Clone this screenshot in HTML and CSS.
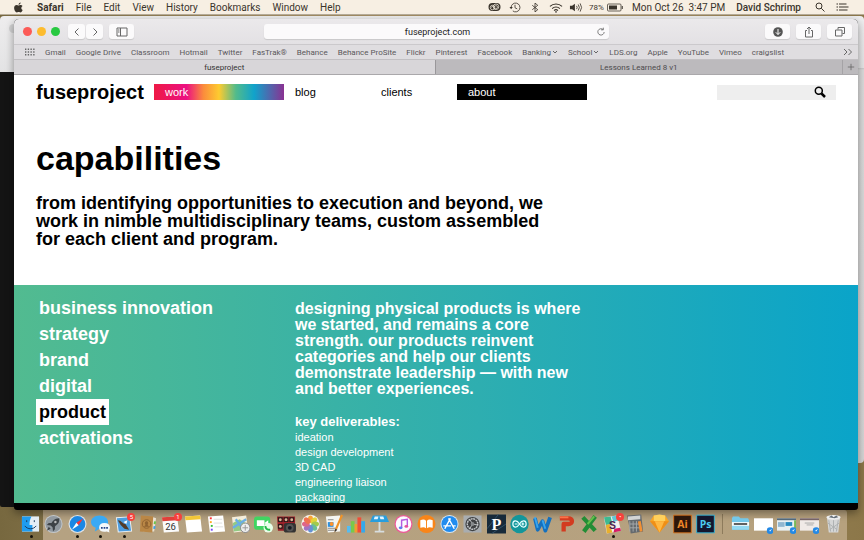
FILE: index.html
```html
<!DOCTYPE html>
<html lang="en">
<head>
<meta charset="utf-8">
<meta name="viewport" content="width=device-width, initial-scale=1">
<title>fuseproject – capabilities</title>
<link rel="stylesheet" href="styles.css">
</head>
<body>
<header class="menubar">
  <svg class="apple" viewBox="0 0 20 20"><path d="M14 1c.1 2-1.700 4-3.900 4C9.900 3.100 11.900 1.200 14 1zM17.500 14.500c-1 2.400-2.300 4.500-4 4.500-1.200 0-1.800-.8-3.300-.8s-2.100.8-3.300.8C4.500 19 2 14.500 2 10.800 2 7.500 4.100 5.500 6.500 5.500c1.400 0 2.600.9 3.500.9.900 0 2.200-1 4-1 1.400 0 2.600.7 3.300 1.800-3.200 1.900-2.700 6.100.2 7.300z" fill="currentColor"/></svg>
  <nav class="menus">
    <strong>Safari</strong><span>File</span><span>Edit</span><span>View</span><span>History</span><span>Bookmarks</span><span>Window</span><span>Help</span>
  </nav>
  <div class="status">
    <svg class="cc" viewBox="0 0 26 20"><rect x="1" y="2" width="24" height="16" rx="8" fill="currentColor"/><g fill="none" stroke="#f6eee2" stroke-width="1.500"><circle cx="9" cy="11" r="4.500"/><circle cx="16" cy="9.500" r="5.500"/><path d="M7 11c0-3 4-3 5 0s3 3 5 2 3-5 0-5.500-4 1-5 3"/></g></svg>
    <svg class="tray" viewBox="0 0 20 20"><g fill="none" stroke="currentColor" stroke-width="1.500"><path d="M3 10a8 8 0 1 1 3 6.200M10 5v5.500l4 2"/></g><path d="M0 9h6l-3 4z" fill="currentColor"/></svg>
    <svg class="tray" viewBox="0 0 20 20"><path d="M5 6l10 8-5 4V2l5 4-10 8" fill="none" stroke="currentColor" stroke-width="1.500"/></svg>
    <svg class="tray wide" viewBox="0 0 24 20"><g fill="none" stroke="currentColor" stroke-width="2"><path d="M1 8a16 16 0 0 1 22 0M5 12a10 10 0 0 1 14 0M8.500 15.500a5 5 0 0 1 7 0"/></g><circle cx="12" cy="18" r="1.500" fill="currentColor"/></svg>
    <svg class="tray wide" viewBox="0 0 24 20"><path d="M1 7h4l5-4v14l-5-4H1z" fill="currentColor"/><g fill="none" stroke="currentColor" stroke-width="1.500"><path d="M13 7a5 5 0 0 1 0 6M16 4.500a9 9 0 0 1 0 11M19.500 2.500a13 13 0 0 1 0 15"/></g></svg>
    <span class="percent">78%</span>
    <svg class="battery" viewBox="0 0 32 18"><rect x="1" y="2" width="27" height="14" rx="2" fill="none" stroke="currentColor" stroke-width="1.500"/><path d="M4 5h16v8H4zM29.500 6h2v6h-2z" fill="currentColor"/></svg>
    <span class="clock">Mon Oct 26&nbsp; 3:47 PM</span>
    <span class="user">David Schrimp</span>
    <svg class="spot" viewBox="0 0 20 20"><g fill="none" stroke="currentColor" stroke-width="2"><circle cx="8" cy="8" r="6"/><path d="M12.500 12.500L19 19"/></g></svg>
    <svg class="list" viewBox="0 0 24 16"><path d="M0 2h3M0 8h3M0 14h3M5 2h15M5 8h19M5 14h17" stroke="currentColor" stroke-width="2.200"/></svg>
  </div>
</header>

<div class="stage">
  <div class="behind-right"></div>
  <div class="behind-left"><i></i></div>
  <main class="window">
    <div class="toolbar">
      <div class="lights"><i class="close"></i><i class="min"></i><i class="max"></i></div>
      <div class="history">
        <button aria-label="Back"><svg viewBox="0 0 10 10"><path d="M6.500 1.500L3 5l3.500 3.500"/></svg></button>
        <button aria-label="Forward"><svg viewBox="0 0 10 10"><path d="M3.500 1.500L7 5 3.500 8.500"/></svg></button>
      </div>
      <button class="side" aria-label="Sidebar"><svg viewBox="0 0 12 10"><path d="M1 1h10v8H1zM4.500 1v8M2 3h1.500M2 5h1.500"/></svg></button>
      <div class="address">
        <input aria-label="Address" value="fuseproject.com">
        <svg viewBox="0 0 12 12"><path d="M8.500 3A3.800 3.800 0 1 0 9.800 6M8.800 .8V3.400H6"/></svg>
      </div>
      <div class="actions">
        <button aria-label="Downloads"><svg viewBox="0 0 12 12"><circle class="disc" cx="6" cy="6" r="4.800"/><path class="arrow" d="M6 3v5.500M3.800 6.300L6 8.500l2.200-2.200"/></svg></button>
        <button aria-label="Share"><svg viewBox="0 0 12 12"><path d="M4 4.500H2.500v6.500h7V4.500H8M6 8V1M4 3l2-2 2 2"/></svg></button>
        <button aria-label="Show tabs"><svg viewBox="0 0 12 12"><path d="M4 3.500V1.500h6.500v6H8.500M1.500 4h6.500v6H1.500z"/></svg></button>
      </div>
    </div>
    <nav class="favorites">
      <svg class="grid" viewBox="0 0 11 8"><path d="M0 1h11M0 4h11M0 7h11" stroke="#666" stroke-width="1.500" stroke-dasharray="1.500 1.500"/></svg>
      <a href="#">Gmail</a><a href="#">Google Drive</a><a href="#">Classroom</a><a href="#">Hotmail</a><a href="#">Twitter</a><a href="#">FasTrak®</a><a href="#">Behance</a><a href="#">Behance ProSite</a><a href="#">Flickr</a><a href="#">Pinterest</a><a href="#">Facebook</a><a href="#">Banking<svg viewBox="0 0 6 6"><path d="M1 2l2 2 2-2"/></svg></a><a href="#">School<svg viewBox="0 0 6 6"><path d="M1 2l2 2 2-2"/></svg></a><a href="#">LDS.org</a><a href="#">Apple</a><a href="#">YouTube</a><a href="#">Vimeo</a><a href="#">craigslist</a>
      <svg class="more" viewBox="0 0 10 8"><path d="M1 1l3 3-3 3M5.500 1l3 3-3 3"/></svg>
    </nav>
    <div class="tabs">
      <button class="tab active">fuseproject</button>
      <button class="tab">Lessons Learned 8 v1</button>
      <button class="add" aria-label="New tab"><svg viewBox="0 0 10 10"><path d="M5 1v8M1 5h8"/></svg></button>
    </div>

    <div class="page">
      <header class="site-header">
        <a class="logo" href="#">fuseproject</a>
        <a class="work" href="#">work</a>
        <a href="#">blog</a>
        <a href="#">clients</a>
        <a class="about" href="#">about</a>
        <label class="search"><input aria-label="Search"><svg viewBox="0 0 12 12"><circle cx="4.800" cy="4.800" r="3.500" fill="none" stroke="#000" stroke-width="1.500"/><path d="M7.500 7.500L11 11" stroke="#000" stroke-width="2.500"/></svg></label>
      </header>
      <section class="intro">
        <h1>capabilities</h1>
        <p>from identifying opportunities to execution and beyond, we<br>work in nimble multidisciplinary teams, custom assembled<br>for each client and program.</p>
      </section>
      <section class="detail">
        <nav class="topics">
          <a href="#">business innovation</a><a href="#">strategy</a><a href="#">brand</a><a href="#">digital</a><a class="current" href="#">product</a><a href="#">activations</a>
        </nav>
        <div class="copy">
          <p class="lead">designing physical products is where<br>we started, and remains a core<br>strength. our products reinvent<br>categories and help our clients<br>demonstrate leadership — with new<br>and better experiences.</p>
          <h2>key deliverables:</h2>
          <ul><li>ideation</li><li>design development</li><li>3D CAD</li><li>engineering liaison</li><li>packaging</li></ul>
        </div>
      </section>
    </div>
  </main>
</div>

<footer class="dock">
  <span class="app open"><svg viewBox="0 0 20 20"><path d="M1 2h18v16H1z" fill="#e4eef6"/><path d="M1 2h10c-2 4-2 6-2 9h3v7H1z" fill="#1f9cf0"/><path d="M6 6v2M14 6v2M4 12c3 4 9 4 12 0" fill="none" stroke="#183a60"/></svg></span>
  <span class="app"><svg viewBox="0 0 20 20"><circle cx="10" cy="10" r="9.500" fill="#c3c8cc"/><circle cx="10" cy="10" r="8.500" fill="#92999f"/><path d="M16 4c-5 0-7 3-8 5H5l-2 2 4 .5 2 2 .5 4 2-2v-3c3-2 5-4 4.500-8.500zM5 13l-2 4 4-2z" fill="#3d4246"/><circle cx="12" cy="8" r="1.300" fill="#bbb"/></svg></span>
  <span class="app open"><svg viewBox="0 0 20 20"><circle cx="10" cy="10" r="9.500" fill="#dfe3e6"/><circle cx="10" cy="10" r="8.300" fill="#1b87e4"/><path d="M16 4l-4.800 7.200-2.400-2.400z" fill="#f33"/><path d="M4 16l4.800-7.200 2.400 2.400z" fill="#fff"/></svg></span>
  <span class="app open"><svg viewBox="0 0 20 20"><path d="M9 1c5 0 9 3 9 7s-4 7-9 7l-5 3 1-4C2 13 0 11 0 8c0-4 4-7 9-7z" fill="#39a9f4"/><path d="M14 9c4 0 6 2 6 5l-1 3 .500 2-3-1c-5 1-8-1-8-4s2-5 5.500-5z" fill="#f4f8fb"/><path d="M10.500 14h1.800M13.300 14h1.800M16 14h1.800" stroke="#248" stroke-width="1.800"/></svg></span>
  <span class="app open"><svg viewBox="0 0 20 20"><path d="M2 3l15-1 2 16-15 1z" fill="#eef2f5"/><path d="M3 4l13-1 2 14-13 1z" fill="#4c9de0"/><path d="M4 6c4 0 5 4 8 4l4 6-5-1-4-4z" fill="#533c28"/><path d="M10 8l4-2-1 4z" fill="#fff"/></svg><b class="badge">5</b></span>
  <span class="app"><svg viewBox="0 0 20 20"><path d="M16 3l3 1-2 14H5z" fill="#e9e1d1"/><path d="M17 7l2 .3-.500 3-2-.3z" fill="#6bc34b"/><path d="M16.500 12l2 .3-.500 3-2-.3z" fill="#3d9ee5"/><path d="M3 1l13 1-1 17-13-1z" fill="#ba8746"/><circle cx="9" cy="10" r="4.500" fill="none" stroke="#906331"/><path d="M9 7c2 0 2 3 1 4l2 2H6l2-2c-1-1-1-4 1-4z" fill="#906331"/></svg></span>
  <span class="app"><svg viewBox="0 0 20 20"><path d="M1 3l16-1 2 16-16 1z" fill="#fafafa"/><path d="M1 3l16-1 .5 4-16 1z" fill="#e0403a"/><text x="10" y="16" class="day">26</text></svg><b class="badge">1</b></span>
  <span class="app"><svg viewBox="0 0 20 20"><path d="M1 2l16-1 2 17-16 1z" fill="#fff"/><path d="M1 2l16-1 .5 4-16 1z" fill="#f3c737"/></svg></span>
  <span class="app"><svg viewBox="0 0 20 20"><path d="M1 2l16-1 2 17-16 1z" fill="#fff"/><path d="M3 4h2" stroke="#f33" stroke-width="2"/><path d="M3 8h2" stroke="#fa2" stroke-width="2"/><path d="M4 12h2" stroke="#3b3" stroke-width="2"/><path d="M4 16h2" stroke="#74f" stroke-width="2"/><path d="M7 5h9M7 9h9M8 13h9" stroke="#ddd"/></svg></span>
  <span class="app"><svg viewBox="0 0 20 20"><path d="M1 3l15-2 2 16-15 2z" fill="#f4eddb"/><path d="M2 9l7-4 8 5 1 6-15 2z" fill="#92ca84"/><path d="M2 14l14-9M5 5l9 12" stroke="#6baee4" stroke-width="2.500"/><circle cx="15" cy="14" r="5" fill="#eee" stroke="#888"/><path d="M12 14h6M15 11v6" stroke="#999"/></svg></span>
  <span class="app"><svg viewBox="0 0 20 20"><rect y="2" width="17" height="14" rx="3" fill="#41d562"/><path d="M3 6h8v6H3zM11 9l4-3v6z" fill="#fff"/><circle cx="15" cy="14" r="5" fill="#e7ffe9"/><path d="M12 12c0 3 2 4 5 4" fill="none" stroke="#23b848" stroke-width="2"/></svg></span>
  <span class="app"><svg viewBox="0 0 20 20"><path d="M0 2h19v15H1z" fill="#9b2029"/><path d="M1 3h5v5H1zM7 3h5v5H7zM13 3h5v5h-5zM1 10h5v5H1z" fill="#2d1718"/><circle cx="3.500" cy="5.500" r="1.500" fill="#dcb398"/><circle cx="9.500" cy="5.500" r="1.500" fill="#dcb398"/><circle cx="15.500" cy="5.500" r="1.500" fill="#dcb398"/><circle cx="3.500" cy="12.500" r="1.500" fill="#dcb398"/><rect x="7" y="9" width="13" height="10" rx="3" fill="#333"/><circle cx="13.500" cy="14" r="4" fill="#555"/><circle cx="13.500" cy="14" r="2" fill="#161b22"/></svg></span>
  <span class="app"><svg viewBox="0 0 20 20"><circle cx="10" cy="10" r="9.700" fill="#f6f4ef"/><g opacity=".9"><ellipse cx="10" cy="5" rx="2.700" ry="4" fill="#fa9c24"/><ellipse cx="10" cy="5" rx="2.700" ry="4" fill="#e4cf25" transform="rotate(45 10 10)"/><ellipse cx="10" cy="5" rx="2.700" ry="4" fill="#9bc63b" transform="rotate(90 10 10)"/><ellipse cx="10" cy="5" rx="2.700" ry="4" fill="#5bb98b" transform="rotate(135 10 10)"/><ellipse cx="10" cy="5" rx="2.700" ry="4" fill="#5788d2" transform="rotate(180 10 10)"/><ellipse cx="10" cy="5" rx="2.700" ry="4" fill="#9b66bd" transform="rotate(225 10 10)"/><ellipse cx="10" cy="5" rx="2.700" ry="4" fill="#dd567e" transform="rotate(270 10 10)"/><ellipse cx="10" cy="5" rx="2.700" ry="4" fill="#ef6540" transform="rotate(315 10 10)"/></g></svg></span>
  <span class="app"><svg viewBox="0 0 20 20"><path d="M2 2l15-1v17l-13 1z" fill="#f5f5f1"/><path d="M4 5h6v1H4zM4 14h9v1H4zM4 16h8v1H4z" fill="#888"/><path d="M4 8h6v5H4z" fill="#2d91df"/><circle cx="8" cy="10" r="2" fill="#ff922c"/><path d="M18 0l2 1-6 14-3 4 1-5z" fill="#f09226"/><path d="M12 15l2 1-3 3z" fill="#333"/></svg></span>
  <span class="app"><svg viewBox="0 0 20 20"><path d="M0 12h4v7H0z" fill="#56bcf0"/><path d="M4 7h4v12H4z" fill="#78c94a"/><path d="M8 10h3v9H8z" fill="#f39b2f"/><path d="M11 3h4v16h-4z" fill="#f04e38"/><path d="M15 7h4v12h-4z" fill="#35a8eb"/></svg></span>
  <span class="app"><svg viewBox="0 0 20 20"><path d="M3 1h14l3 7H0z" fill="#289ede"/><path d="M5 2h4l-1 3H4zM10 2h4l1 3h-4z" fill="#e3f4ff"/><path d="M9 8h2v9H9zM5 17h10v2H5z" fill="#d7dddf"/></svg></span>
  <span class="app"><svg viewBox="0 0 20 20"><circle cx="10" cy="10" r="9.500" fill="#ef5799"/><circle cx="10" cy="10" r="8.200" fill="#fbfbff"/><path d="M8 14V6l6-1v7" fill="none" stroke="#b65bdf" stroke-width="1.500"/><ellipse cx="7" cy="14" rx="2" ry="1.500" fill="#5c80ef"/><ellipse cx="13" cy="12.500" rx="2" ry="1.500" fill="#e6519d"/></svg></span>
  <span class="app"><svg viewBox="0 0 20 20"><circle cx="10" cy="10" r="9.500" fill="#f98519"/><path d="M3.500 6C6 5 8 5 9.500 6.500v8C8 13 6 13 3.500 14zM16.500 6C14 5 12 5 10.500 6.500v8C12 13 14 13 16.500 14z" fill="#fff"/></svg></span>
  <span class="app"><svg viewBox="0 0 20 20"><circle cx="10" cy="10" r="9.500" fill="#d9e7f2"/><circle cx="10" cy="10" r="8.500" fill="#218cef"/><path d="M5 15L11 4M9 4l6 11M3.500 12h8M14 12h2.500" stroke="#fff" stroke-width="1.500"/></svg></span>
  <span class="app"><svg viewBox="0 0 20 20"><path d="M.5 1h19v18H.5z" fill="#a9adb0"/><circle cx="10" cy="10" r="7.500" fill="#3f4143"/><circle cx="10" cy="10" r="5.500" fill="none" stroke="#c5c8ca" stroke-width="1.500" stroke-dasharray="2 .6"/><path d="M10 10l5 1M10 10L7 5M10 10l-3 5" stroke="#c5c8ca"/><circle cx="10" cy="10" r="2" fill="#85898b"/></svg></span>
  <span class="app"><svg viewBox="0 0 20 20"><path d="M0 0h20v20H0z" fill="#172a3a"/><path d="M0 15L12 0M5 20l15-10" stroke="#315068"/><text x="10" y="16" class="serif">P</text></svg></span>
  <span class="app"><svg viewBox="0 0 20 20"><circle cx="10" cy="10" r="9.700" fill="#13969b"/><path d="M10 10C7 5 3 6.500 3 10s4 5 7 0 7-3.500 7 0-4 5-7 0zM5 10h3M12 10h3M13.500 8.500v3" fill="none" stroke="#e5ffff" stroke-width="1.300"/></svg></span>
  <span class="app"><svg viewBox="0 0 20 20"><path d="M2 4l3 12 5-9 3 10L18 3" fill="none" stroke="#1470bf" stroke-width="4" stroke-linejoin="round"/><path d="M2 3l3 11M10 6l3 9" stroke="#38a5ee" stroke-width="2"/></svg></span>
  <span class="app"><svg viewBox="0 0 20 20"><path d="M3 4h9c5 0 5 6 0 6H7v8" fill="none" stroke="#d33b20" stroke-width="4.500" stroke-linejoin="round"/><path d="M3 3h9" stroke="#fb7449" stroke-width="2"/></svg></span>
  <span class="app"><svg viewBox="0 0 20 20"><path d="M16 2L4 18M3 3l13 14" stroke="#238d36" stroke-width="4.500"/><path d="M15 2l-7 8" stroke="#66c04c" stroke-width="2"/></svg></span>
  <span class="app open"><svg viewBox="0 0 20 20"><path d="M1 3l14-2 4 16-15 3z" fill="#f2f0ed"/><path d="M1 3l7-1 2 8-7 1z" fill="#3eb991"/><path d="M3 11l4-1 3 9-6 1z" fill="#e8af2d"/><path d="M12 15l6-1 1 3-8 2z" fill="#d61c66"/><path d="M9 2l6-1 2 5-6 2z" fill="#62c6d7"/><text x="10" y="15" class="slack">S</text></svg><b class="badge">•</b></span>
  <span class="app"><svg viewBox="0 0 20 20"><path d="M1 1l15-1 2 18-13 2z" fill="#656a6e"/><path d="M2 2l13-1v4l-13 1z" fill="#d2d4d5"/><path d="M4 7v11M7.500 7v11M11 7v11M4 10h10M4 14h11" stroke="#a5a9ab"/><path d="M14 7l2 11" stroke="#f29134" stroke-width="3"/></svg></span>
  <span class="app"><svg viewBox="0 0 20 20"><path d="M4 1h12l4 6-10 12L0 7z" fill="#f8a425"/><path d="M4 1l6-1 6 1 0 6H4z" fill="#ffd05d"/><path d="M0 7h20L10 19z" fill="#ef8f17"/><path d="M5 7h10l-5 12z" fill="#ffb842"/></svg></span>
  <span class="app"><svg viewBox="0 0 20 20"><path d="M.7.700h18.600v18.600H.7z" fill="#2d160b" stroke="#d5701a"/><text x="10" y="14" class="adobe ai">Ai</text></svg></span>
  <span class="app"><svg viewBox="0 0 20 20"><path d="M.7.700h18.600v18.600H.7z" fill="#14162e" stroke="#35b5d7"/><text x="10" y="14" class="adobe ps">Ps</text></svg></span>
  <span class="divider"></span>
  <span class="app"><svg viewBox="0 0 20 20"><path d="M1 4l1-2h6l2 2h8l1 2v10H1z" fill="#74c8ea"/><path d="M1 8h18v4H1z" fill="#f6fbfd"/><path d="M3 10h14" stroke="#222" stroke-width="1.500"/><path d="M1 12h18v4H1z" fill="#94d9f2"/></svg></span>
  <span class="app"><svg viewBox="0 0 20 20"><path d="M0 4h20v13H0z" fill="#fff"/><circle cx="17" cy="17" r="3.500" fill="#2489e5"/><path d="M19 15l-2 3-1-1z" fill="#fff"/></svg></span>
  <span class="app"><svg viewBox="0 0 20 20"><path d="M0 4h20v13H0z" fill="#e9f0f2"/><path d="M0 4h20v2H0z" fill="#53697a"/><path d="M1 8h7v5H1z" fill="#91b7d1"/><path d="M9 8h7v4H9z" fill="#278ac0"/><path d="M18 6h2v9h-2z" fill="#78b957"/><circle cx="17" cy="17" r="3.500" fill="#2489e5"/><path d="M19 15l-2 3-1-1z" fill="#fff"/></svg></span>
  <span class="app"><svg viewBox="0 0 20 20"><path d="M0 4h20v13H0z" fill="#f0eae7"/><path d="M0 4h20v2H0z" fill="#766467"/><path d="M5 9h10M7 11h7" stroke="#aaa"/><circle cx="17" cy="17" r="3.500" fill="#2489e5"/><path d="M19 15l-2 3-1-1z" fill="#fff"/></svg></span>
  <span class="app"><svg viewBox="0 0 20 20"><path d="M3 2h14l-2 17H5z" fill="#d5d6d6"/><path d="M5 6l2 12M10 6v12M15 6l-2 12M4 9l10 7M16 9L6 16" stroke="#adb0b1"/><ellipse cx="10" cy="3" rx="7.500" ry="2.500" fill="#eee"/><path d="M5 3l3-2 2 2 3-2 2 2-4 1z" fill="#646e78"/></svg></span>
</footer>
</body>
</html>
```
FILE: styles.css
```css
* { box-sizing: border-box; }
body {
  margin: 0;
  height: 100vh;
  display: flex;
  flex-direction: column;
  overflow: hidden;
  font-family: Roboto, "Liberation Sans", sans-serif;
  background: linear-gradient(90deg, #77683f, #a08b62 30%, #a58f65 70%, #8c7749);
}
a { color: inherit; text-decoration: none; }
button { border: 0; margin: 0; padding: 0; font: inherit; color: inherit; }
input { border: 0; margin: 0; padding: 0; min-width: 0; font: inherit; color: inherit; background: none; outline: 0; }
svg { display: block; flex: none; }
h1, h2, p, ul { margin: 0; padding: 0; }

.menubar {
  flex: none;
  display: flex;
  align-items: center;
  height: 15px;
  padding: 0 15px 0 13px;
  color: #3a342c;
  background: #f7efe3;
  border-bottom: 1px solid #b7ad99;
  font-size: 10px;
  white-space: nowrap;
}
.apple { width: 11px; height: 11px; margin-right: 13px; }
.menus, .status { display: flex; align-items: center; }
.menus { gap: 12px; }
.status { margin-left: auto; }
.cc { width: 13px; height: 10px; margin-right: 8px; }
.tray { width: 12px; height: 11px; margin-right: 8px; }
.tray.wide { width: 14px; margin-right: 6px; }
.percent { font-size: 8px; margin-right: 3px; }
.battery { width: 16px; height: 9px; margin-right: 9px; }
.clock { margin-right: 11px; }
.user { font-weight: 500; margin-right: 14px; }
.spot { width: 10px; height: 10px; margin-right: 11px; }
.list { width: 13px; height: 8px; }

.stage { position: relative; flex: 1; min-height: 0; padding: 4px 6px 0 14px; }
.behind-left {
  position: absolute;
  left: 0; top: 1px; bottom: 3px;
  width: 30px;
  border-radius: 4px 0 0 2px;
  background: linear-gradient(#eeedee 0, #e3e3e4 56px, #141414 56px);
}
.behind-left i { position: absolute; left: 9px; top: 8px; width: 9px; height: 9px; border-radius: 50%; background: #d2d2d3; }
.behind-right {
  position: absolute;
  left: 20px; right: 0; top: 1px; bottom: 47px;
  border-radius: 0 4px 4px 0;
  background: linear-gradient(#eeeeef 0, #e6e6e7 52px, #c9c9ca 52px, #dcdcdc 54px, #d6d6d6);
}
.window {
  position: relative;
  height: 100%;
  display: flex;
  flex-direction: column;
  border-radius: 5px 5px 3px 3px;
  overflow: hidden;
  background: #000;
  padding-bottom: 7px;
  box-shadow: 0 3px 8px rgba(0, 0, 0, .4);
}
.toolbar {
  flex: none;
  display: flex;
  align-items: center;
  height: 25px;
  padding: 0 6px 0 9px;
  background: linear-gradient(#ebe9eb, #e3e1e4);
}
.toolbar button, .address {
  display: flex;
  align-items: center;
  justify-content: center;
  height: 15px;
  border-radius: 3px;
  background: #fbfafb;
  box-shadow: 0 1px 1px rgba(0, 0, 0, .12);
}
.toolbar svg, .favorites svg, .tabs svg { fill: none; stroke: #666; stroke-width: 1; }
.toolbar .disc { fill: #555; stroke: none; }
.toolbar .arrow { stroke: #fff; }
.lights { display: flex; gap: 5px; }
.lights i { width: 9px; height: 9px; border-radius: 50%; }
.close { background: #fc5b57; }
.min { background: #fdbc2f; }
.max { background: #28c941; }
.history { display: flex; gap: 1px; margin-left: 8px; }
.history button { width: 17px; }
.history svg { width: 10px; height: 10px; }
.toolbar .side { width: 25px; margin-left: 6px; }
.side svg { width: 12px; height: 10px; }
.address { flex: 1; max-width: 345px; margin-left: 130px; padding: 0 3px 0 15px; font-size: 9px; color: #222; }
.address input { flex: 1; text-align: center; }
.address svg { width: 10px; height: 10px; }
.actions { display: flex; gap: 6px; margin-left: auto; }
.toolbar .actions button { width: 25px; }
.actions svg { width: 12px; height: 12px; }

.favorites {
  flex: none;
  display: flex;
  align-items: center;
  gap: 10px;
  height: 15px;
  padding: 0 5px 0 11px;
  background: #dfdde0;
  border-top: 1px solid #cbc9cc;
  color: #5a585b;
  font-size: 8px;
  white-space: nowrap;
}
.favorites a { display: flex; align-items: center; }
.favorites a svg { width: 6px; height: 6px; margin-left: 1px; }
.grid { width: 10px; height: 8px; }
.more { width: 10px; height: 8px; margin-left: auto; }
.tabs {
  flex: none;
  display: flex;
  height: 16px;
  border-top: 1px solid #c2c0c3;
  border-bottom: 1px solid #aaa8ab;
  font-size: 8px;
}
.tab { flex: 1; color: #4d4b4e; background: #bcbabd; }
.tab.active { flex: 1 1 15px; color: #333; background: #d8d6d9; border-right: 1px solid #99979a; }
.add { width: 16px; background: #bcbabd; border-left: 1px solid #a5a3a6; display: grid; place-items: center; }
.add svg { width: 8px; height: 8px; }

.page { flex: 1; min-height: 0; overflow: hidden; display: flex; flex-direction: column; background: #fff; color: #000; font-family: "Liberation Sans", Arial, sans-serif; }
.site-header {
  flex: none;
  display: grid;
  grid-template-columns: 118px 130px 86px 87px 130px minmax(0, 1fr);
  align-items: center;
  padding: 7px 22px 0;
  font-size: 11px;
  line-height: 16px;
}
.site-header a { padding-left: 11px; }
.site-header .logo { padding: 0; font-size: 20px; line-height: 20px; font-weight: bold; }
.site-header .work { color: #fff; background: linear-gradient(90deg, #ee1a45, #ec1082 25%, #fb8c3c 38%, #fdcb30 50%, #52bb8b 63%, #10a3cb 77%, #8a3192); }
.site-header .about { color: #fff; background: #000; }
.search { display: flex; align-items: center; justify-self: end; width: 119px; height: 15px; padding-right: 10px; background: #eee; }
.search input { flex: 1; }
.search svg { width: 12px; height: 12px; }
.intro { flex: none; padding: 37px 22px; }
.intro h1 { font-size: 34px; line-height: 38px; margin-bottom: 17px; }
.intro p { font-size: 18px; line-height: 18px; font-weight: bold; }
.detail {
  flex: 1;
  min-height: 0;
  display: grid;
  grid-template-columns: 259px 1fr;
  padding: 10px 22px 0;
  color: #fff;
  background: linear-gradient(90deg, #52bb90, #2eaeb0 55%, #0aa4c9);
}
.topics { display: flex; flex-direction: column; align-items: flex-start; font-size: 18px; line-height: 26px; font-weight: bold; }
.topics a { padding: 0 3px; }
.topics .current { color: #000; background: #fff; }
.copy { padding-top: 6px; }
.lead { font-size: 16px; line-height: 16px; font-weight: bold; margin-bottom: 17px; }
.copy h2 { font-size: 13px; line-height: 16px; }
.copy ul { list-style: none; font-size: 11px; line-height: 15px; }

.dock {
  flex: none;
  display: flex;
  align-items: flex-start;
  height: 30px;
  margin: 0 17px;
  padding: 4px 2px 0;
  border-radius: 0 3px 0 0;
  background: linear-gradient(90deg, transparent 26px, #b5a282 26px, #b6a17e);
}
.app { position: relative; flex: 1; display: flex; justify-content: center; height: 26px; }
.app svg { width: 19px; height: 20px; }
.open::after { content: ""; position: absolute; bottom: 2px; left: 50%; width: 3px; height: 3px; margin-left: -1px; border-radius: 50%; background: #16120a; }
.badge { position: absolute; top: -1px; right: 0; width: 8px; height: 8px; border-radius: 50%; background: #f6413d; color: #fff; font-size: 6px; line-height: 8px; text-align: center; font-weight: normal; }
.divider { width: 11px; height: 20px; background: linear-gradient(90deg, transparent 5px, #8d7b5c 5px, #8d7b5c 6px, transparent 6px); }
.day { font: 10px Roboto, sans-serif; text-anchor: middle; fill: #333; }
.serif { font: bold 17px "Liberation Serif", serif; text-anchor: middle; fill: #fff; }
.slack { font: bold 11px "Liberation Sans", sans-serif; text-anchor: middle; fill: #4d2450; }
.adobe { font: bold 11px "Open Sans", sans-serif; text-anchor: middle; }
.ai { fill: #ef8729; }
.ps { fill: #4ccaf0; }
```
